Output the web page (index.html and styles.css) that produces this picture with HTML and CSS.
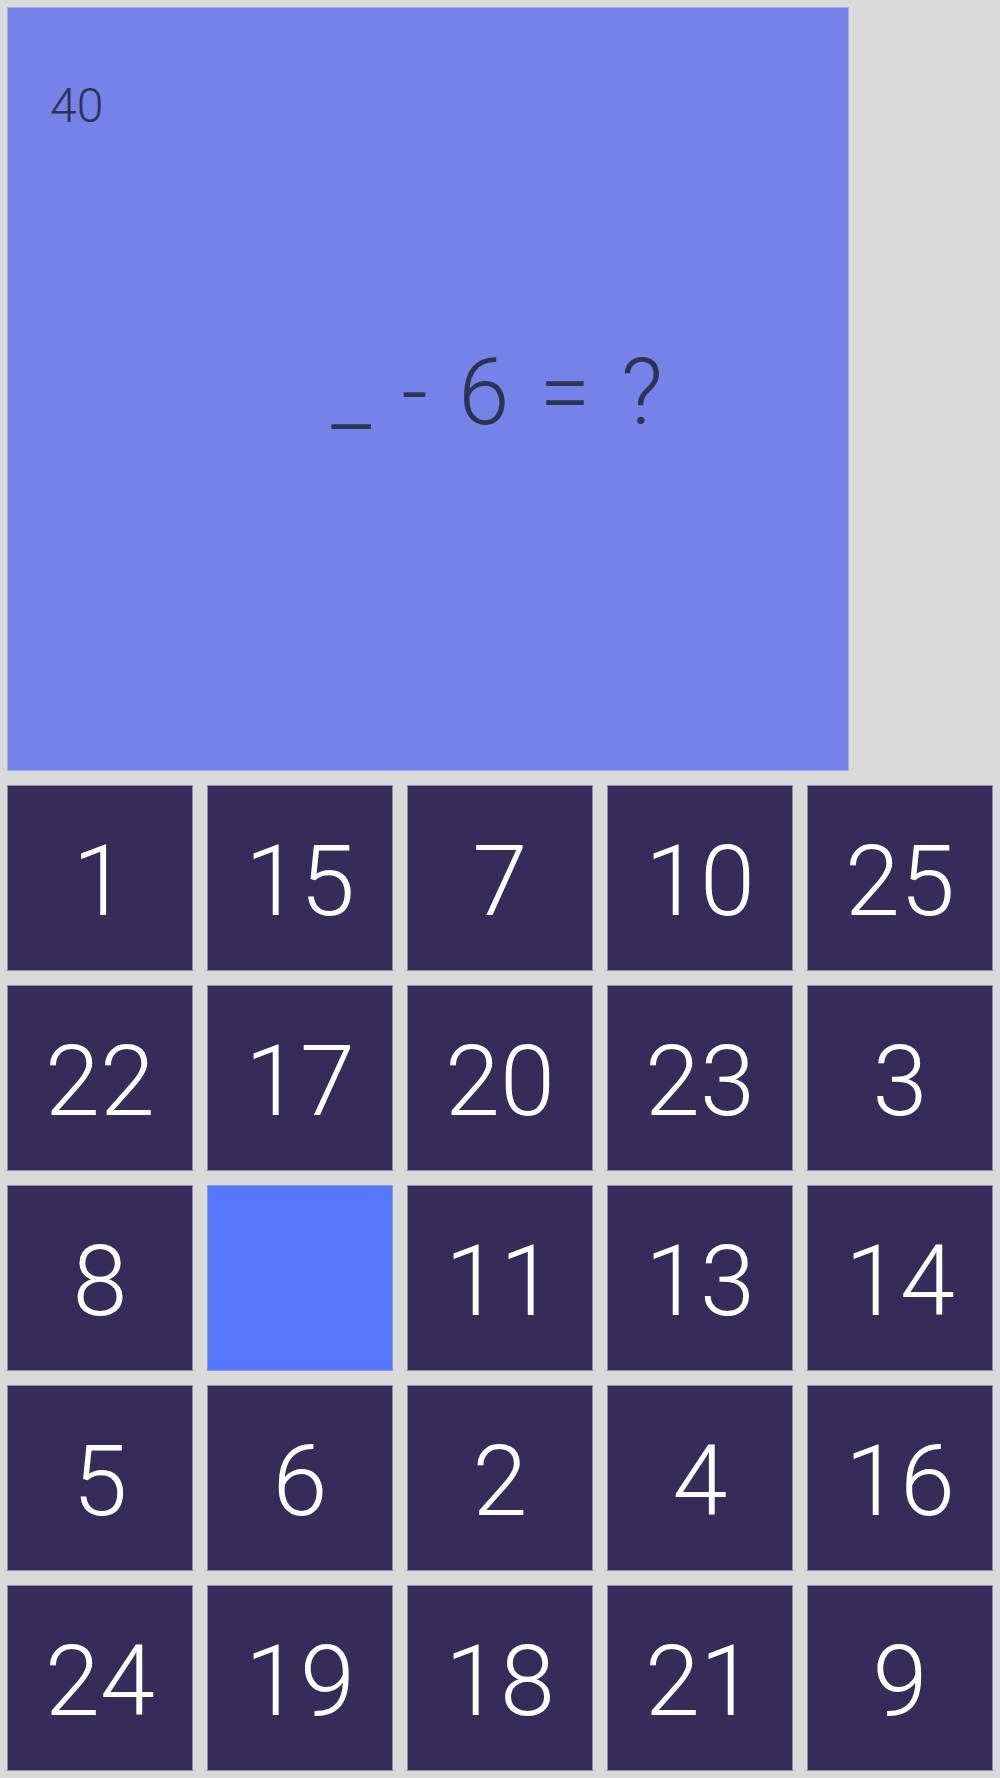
FILE: index.html
```html
<!DOCTYPE html>
<html lang="en">
<head>
    <meta charset="UTF-8">
    <meta name="viewport" content="width=device-width, initial-scale=1.0">
    <title>Number Hunt</title>
    <link rel="stylesheet" href="styles.css">
</head>
<body>

    <div class="board">
        <div class="question">
            <div class="score">40</div>
            <div class="equation">_ - 6 = ?</div>
        </div>

        <div class="tiles">
            <div class="tile">1</div>
            <div class="tile">15</div>
            <div class="tile">7</div>
            <div class="tile">10</div>
            <div class="tile">25</div>

            <div class="tile">22</div>
            <div class="tile">17</div>
            <div class="tile">20</div>
            <div class="tile">23</div>
            <div class="tile">3</div>

            <div class="tile">8</div>
            <div class="tile picked"></div>
            <div class="tile">11</div>
            <div class="tile">13</div>
            <div class="tile">14</div>

            <div class="tile">5</div>
            <div class="tile">6</div>
            <div class="tile">2</div>
            <div class="tile">4</div>
            <div class="tile">16</div>

            <div class="tile">24</div>
            <div class="tile">19</div>
            <div class="tile">18</div>
            <div class="tile">21</div>
            <div class="tile">9</div>
        </div>
    </div>

</body>
</html>
```

FILE: styles.css
```css
body {
    margin: 0;
    padding: 7px;
    background-color: #dadada;
    font-family: Roboto, "Liberation Sans", sans-serif;
    font-weight: 300;
}
.board {
    width: 986px;
}
.question {
    display: grid;
    width: 842px;
    height: 764px;
    box-sizing: border-box;
    background-color: #7582e8;
    border: 1px solid #a3abea;
    color: #2d3352;
}
.score,
.equation {
    grid-area: 1 / 1;
}
.score {
    align-self: start;
    justify-self: start;
    padding: 74px 0 0 42px;
    font-size: 48px;
    line-height: 1;
}
.equation {
    align-self: center;
    justify-self: center;
    padding: 7px 0 0 138px;
    font-size: 92px;
    line-height: 1;
    word-spacing: 8px;
    white-space: pre;
}
.tiles {
    display: grid;
    grid-template-columns: repeat(5, 186px);
    grid-auto-rows: 186px;
    gap: 14px;
    margin-top: 14px;
}
.tile {
    display: flex;
    align-items: center;
    justify-content: center;
    box-sizing: border-box;
    padding-top: 6px;
    background-color: #352c5a;
    border: 1px solid #8e8aa8;
    color: #ffffff;
    font-size: 99px;
    line-height: 1;
}
.tile.picked {
    background-color: #5577fc;
    border-color: #8c9ad8;
}
```
